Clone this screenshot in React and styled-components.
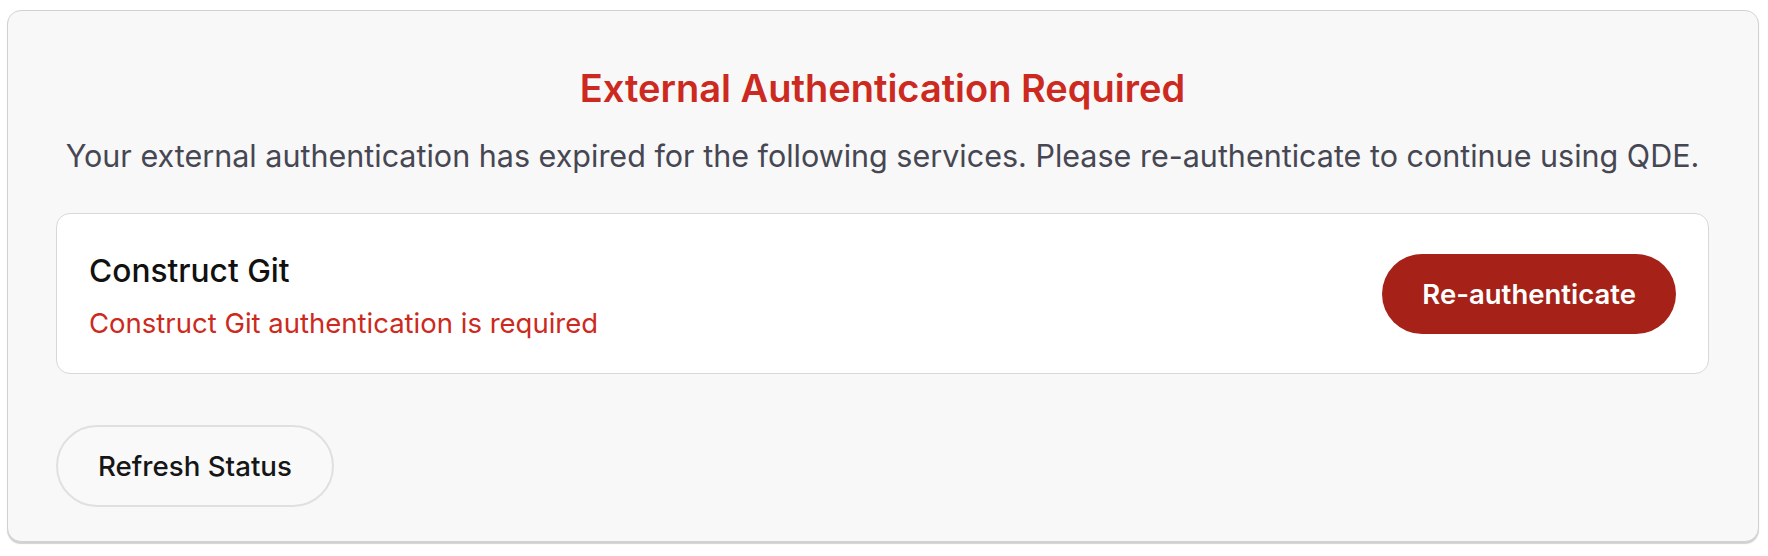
import styled, { createGlobalStyle } from "styled-components";

const GlobalStyle = createGlobalStyle`
  html, body {
    margin: 0;
    padding: 0;
    background: #ffffff;
  }

  body {
    font-family: Inter, "Noto Sans", "Liberation Sans", sans-serif;
    -webkit-font-smoothing: antialiased;
  }
`;

const services = [
  {
    name: "Construct Git",
    message: "Construct Git authentication is required",
  },
];

export default function App() {
  return (
    <>
      <GlobalStyle />
      <Page>
        <Panel>
          <Title>External Authentication Required</Title>
          <Subtitle>
            Your external authentication has expired for the following
            services. Please re-authenticate to continue using QDE.
          </Subtitle>
          <ServiceList>
            {services.map((service) => (
              <ServiceCard key={service.name}>
                <ServiceText>
                  <ServiceName>{service.name}</ServiceName>
                  <ServiceError>{service.message}</ServiceError>
                </ServiceText>
                <PrimaryButton type="button">Re-authenticate</PrimaryButton>
              </ServiceCard>
            ))}
          </ServiceList>
          <Actions>
            <SecondaryButton type="button">Refresh Status</SecondaryButton>
          </Actions>
        </Panel>
      </Page>
    </>
  );
}

const Page = styled.div`
  padding: 10px 9px 12px 7px;
`;

const Panel = styled.section`
  display: flex;
  flex-direction: column;
  align-items: stretch;
  padding: 54px 49px 34px 48px;
  background: #f8f8f8;
  border: 1px solid #d2d2d2;
  border-radius: 14px;
  box-shadow: 0 2px 1px rgba(0, 0, 0, 0.18);
`;

const Title = styled.h1`
  margin: 0;
  text-align: center;
  font-size: 38px;
  font-weight: 600;
  line-height: 46px;
  color: #cc2a20;
`;

const Subtitle = styled.p`
  margin: 27px 0 0;
  text-align: center;
  font-size: 30.5px;
  font-weight: 400;
  line-height: 36px;
  color: #464752;
`;

const ServiceList = styled.div`
  display: flex;
  flex-direction: column;
  gap: 16px;
  margin-top: 39px;
`;

const ServiceCard = styled.div`
  display: flex;
  align-items: center;
  justify-content: space-between;
  height: 161px;
  box-sizing: border-box;
  padding: 0 32px 0 32px;
  background: #ffffff;
  border: 1px solid #d8d8d8;
  border-radius: 14px;
`;

const ServiceText = styled.div`
  display: flex;
  flex-direction: column;
  gap: 16px;
  margin-top: 4px;
`;

const ServiceName = styled.div`
  font-size: 31.7px;
  font-weight: 500;
  line-height: 38px;
  color: #111111;
`;

const ServiceError = styled.div`
  font-size: 27.5px;
  font-weight: 400;
  line-height: 34px;
  color: #cc2a20;
`;

const PrimaryButton = styled.button`
  height: 80px;
  padding: 0 40px;
  border: none;
  border-radius: 40px;
  background: #a62118;
  color: #ffffff;
  font-family: inherit;
  font-size: 27.5px;
  font-weight: 600;
  cursor: pointer;
`;

const Actions = styled.div`
  display: flex;
  margin-top: 51px;
`;

const SecondaryButton = styled.button`
  height: 82px;
  padding: 0 40px;
  border: 2px solid #e0e0e0;
  border-radius: 41px;
  background: #f9f9f9;
  color: #161616;
  font-family: inherit;
  font-size: 27.7px;
  font-weight: 500;
  cursor: pointer;
`;
